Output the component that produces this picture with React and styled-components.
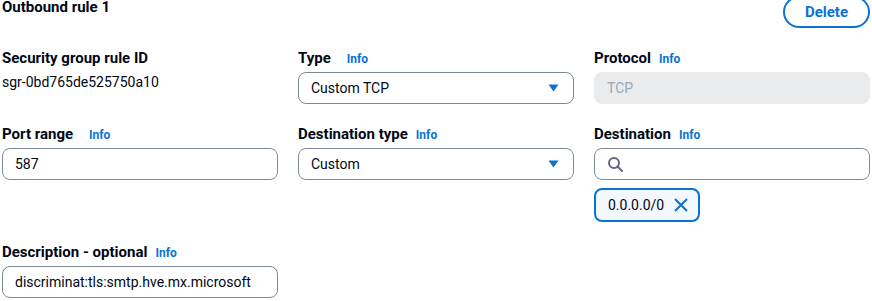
import React from 'react';
import styled, { createGlobalStyle } from 'styled-components';

const GlobalStyle = createGlobalStyle`
  body {
    margin: 0;
    background: #ffffff;
    font-family: Roboto, "Open Sans", Arial, sans-serif;
    font-size: 14px;
    line-height: 22px;
    color: #000716;
  }
`;

const Page = styled.div`
  width: 868px;
  margin-left: 2px;
`;

const Header = styled.div`
  display: flex;
  justify-content: space-between;
  align-items: flex-start;
  margin-bottom: 19px;
`;

const Title = styled.h3`
  margin: 0;
  font-size: 15px;
  line-height: 14px;
  font-weight: 700;
`;

const DeleteButton = styled.button`
  margin-top: -4px;
  font-family: inherit;
  font-size: 15px;
  line-height: 22px;
  font-weight: 700;
  color: #0972d3;
  background: #ffffff;
  border: 2px solid #0972d3;
  border-radius: 20px;
  padding: 3px 20px;
  cursor: pointer;
`;

const Grid = styled.div`
  display: grid;
  grid-template-columns: repeat(3, 1fr);
  column-gap: 20px;
  row-gap: 19px;
`;

const Field = styled.div`
  display: flex;
  flex-direction: column;
  min-width: 0;
`;

const LabelRow = styled.div`
  height: 22px;
  display: flex;
  align-items: baseline;
  gap: ${(p) => p.$gap || 8}px;
  margin-bottom: 3px;
`;

const Label = styled.span`
  font-weight: 700;
  font-size: 15px;
  line-height: 22px;
`;

const InfoLink = styled.a`
  font-size: 12px;
  line-height: 22px;
  font-weight: 700;
  color: #0972d3;
  text-decoration: none;
`;

const Value = styled.div`
  margin-top: -1px;
  line-height: 22px;
`;

const Box = styled.div`
  box-sizing: border-box;
  height: 32px;
  display: flex;
  align-items: center;
  gap: 10px;
  padding: 0 14px 0 12px;
  border: 1px solid ${(p) => (p.$disabled ? '#e9ebed' : '#7d8998')};
  background: ${(p) => (p.$disabled ? '#e9ebed' : '#ffffff')};
  color: ${(p) => (p.$disabled ? '#9ba7b6' : '#000716')};
  border-radius: 8px;
`;

const BoxText = styled.span`
  flex: 1;
  white-space: nowrap;
  overflow: hidden;
`;

const Token = styled.div`
  box-sizing: border-box;
  align-self: flex-start;
  margin-top: 8px;
  height: 34px;
  display: flex;
  align-items: center;
  gap: 10px;
  padding: 0 10px 0 12px;
  border: 2px solid #0972d3;
  border-radius: 8px;
  background: #f2f8fd;
`;

const IconButton = styled.span`
  display: flex;
  color: #0972d3;
`;

const Caret = () => (
  <svg width="11" height="8" viewBox="0 0 11 8">
    <path d="M0.5 0.5 L10.5 0.5 L5.5 7.5 Z" fill="#0972d3" />
  </svg>
);

const SearchIcon = () => (
  <svg width="16" height="16" viewBox="0 0 16 16" fill="none" stroke="#5f6b7a" strokeWidth="2">
    <circle cx="7" cy="7" r="5" />
    <path d="M10.5 10.5 L15 15" strokeLinecap="round" />
  </svg>
);

const CloseIcon = () => (
  <svg width="14" height="14" viewBox="0 0 14 14" fill="none" stroke="currentColor" strokeWidth="2">
    <path d="M1 1 L13 13 M13 1 L1 13" />
  </svg>
);

const FieldLabel = ({ text, gap }) => (
  <LabelRow $gap={gap}>
    <Label>{text}</Label>
    <InfoLink href="#">Info</InfoLink>
  </LabelRow>
);

export default function App() {
  return (
    <>
      <GlobalStyle />
      <Page>
        <Header>
          <Title>Outbound rule 1</Title>
          <DeleteButton>Delete</DeleteButton>
        </Header>
        <Grid>
          <Field>
            <LabelRow>
              <Label>Security group rule ID</Label>
            </LabelRow>
            <Value>sgr-0bd765de525750a10</Value>
          </Field>
          <Field>
            <FieldLabel text="Type" gap={16} />
            <Box>
              <BoxText>Custom TCP</BoxText>
              <Caret />
            </Box>
          </Field>
          <Field>
            <FieldLabel text="Protocol" />
            <Box $disabled>
              <BoxText>TCP</BoxText>
            </Box>
          </Field>

          <Field>
            <FieldLabel text="Port range" gap={16} />
            <Box>
              <BoxText>587</BoxText>
            </Box>
          </Field>
          <Field>
            <FieldLabel text="Destination type" />
            <Box>
              <BoxText>Custom</BoxText>
              <Caret />
            </Box>
          </Field>
          <Field>
            <FieldLabel text="Destination" />
            <Box>
              <SearchIcon />
              <BoxText />
            </Box>
            <Token>
              <span>0.0.0.0/0</span>
              <IconButton>
                <CloseIcon />
              </IconButton>
            </Token>
          </Field>

          <Field>
            <FieldLabel text="Description - optional" />
            <Box>
              <BoxText>discriminat:tls:smtp.hve.mx.microsoft</BoxText>
            </Box>
          </Field>
        </Grid>
      </Page>
    </>
  );
}
